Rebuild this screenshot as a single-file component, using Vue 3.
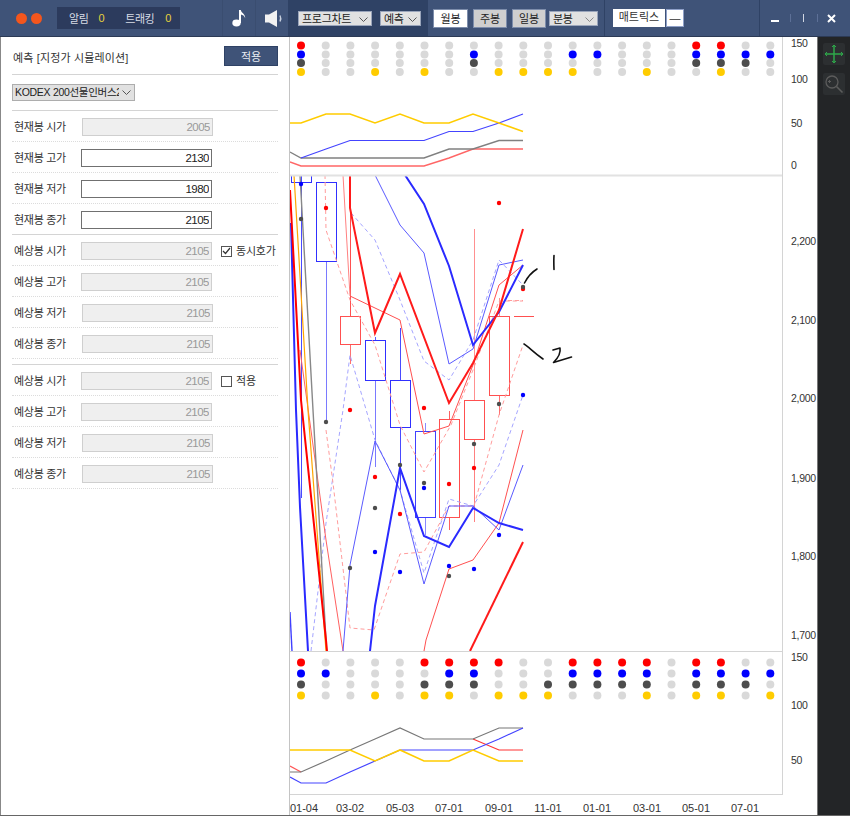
<script setup>
const col = i => 301 + i * 24.7

const dotColors = { r: '#ff0000', b: '#0000ff', k: '#4d4d4d', y: '#ffcc00' }

function dotRows(rows) {
  const out = []
  rows.forEach(row => {
    for (let i = 0; i < 20; i++) {
      out.push({
        x: col(i),
        y: row.y,
        fill: row.on.includes(i) ? dotColors[row.c] : '#d9d9d9'
      })
    }
  })
  return out
}

const topDots = dotRows([
  { y: 45.5, c: 'r', on: [0, 16, 17] },
  { y: 54.5, c: 'b', on: [0, 7, 11, 12, 16, 17, 18, 19] },
  { y: 63, c: 'k', on: [0, 7, 16, 17, 18] },
  { y: 72, c: 'y', on: [0, 3, 5, 8, 9, 10, 11, 14, 17] }
])

const bottomDots = dotRows([
  { y: 662.5, c: 'r', on: [0, 5, 6, 7, 8, 11, 12, 13, 14, 16, 17] },
  { y: 673.5, c: 'b', on: [0, 1, 6, 7, 11, 12, 13, 14, 16, 17, 18, 19] },
  { y: 684.5, c: 'k', on: [0, 5, 6, 7, 10, 11, 12, 13, 14, 16, 17, 18] },
  { y: 695.5, c: 'y', on: [0, 3, 5, 6, 8, 9, 10, 14, 16, 17, 19] }
])

const topLines = [
  { c: '#ff6666', w: 1.4, p: '290,162 301,166 424,166 449,158 473,149 523,149' },
  { c: '#808080', w: 1.4, p: '290,152 301,158 424,158 449,149 473,149 499,140.5 523,140.5' },
  { c: '#4444ff', w: 1.2, p: '301,158 326,149 350,140.5 424,140.5 449,131.5 473,131.5 499,123 523,114' },
  { c: '#ffcc00', w: 1.6, p: '290,123 301,123 326,114 350,114 375,123 400,114 424,123 449,123 473,114 499,123 523,131.5' }
]

const bottomLines = [
  { c: '#ff5555', w: 1.2, p: '290,766 301,772' },
  { c: '#ff3333', w: 1.2, p: '473,739 499,750 523,750' },
  { c: '#777777', w: 1.2, p: '290,772 301,772 326,761 350,750 375,739 400,728 424,739 473,739 499,728 523,728' },
  { c: '#4444ff', w: 1.2, p: '290,777 301,783 326,783 350,772 375,761 400,750 473,750 499,739 523,728' },
  { c: '#ffcc00', w: 1.6, p: '290,750 350,750 375,761 400,750 424,761 449,761 473,750 499,761 523,761' }
]

const mainLines = [
  // 점선
  { c: '#a5a5ff', w: 1, d: true, p: '351,213 375,240 400,300 424,361 449,380 473,340 499,260 523,285' },
  { c: '#a5a5ff', w: 1, d: true, p: '311,651 326,523 343,410 350,355 375,440 400,490 424,573 449,499 473,506 499,465 523,395' },
  { c: '#ff9c9c', w: 1, d: true, p: '325,175 326,230 350,300 375,345 400,425 424,472 451,425 473,370 499,301 523,301' },
  { c: '#ff9c9c', w: 1, d: true, p: '326,430 333,483 350,628 374,630 400,554 424,552 449,506 474,506 499,415 523,345' },
  // 가는선
  { c: '#ff8080', w: 1, p: '343,175 350,296' },
  { c: '#ff5050', w: 1, p: '350,296 400,320 424,434 449,426 473,365 499,285 523,265' },
  { c: '#ff6060', w: 1, p: '300,350 326,540 343,651' },
  { c: '#ff5050', w: 1, p: '424,651 426,640 449,569 473,560 499,523 523,430' },
  { c: '#5a5aff', w: 1, p: '375,175 400,225 424,253 449,364 473,349 499,265 523,260' },
  { c: '#5a5aff', w: 1, p: '343,651 350,565 375,441 400,490 424,584 449,506 473,506 499,530 523,465' },
  // 왼쪽 세로선
  { c: '#ffa500', w: 1.2, p: '294,175 308,410 326,651' },
  { c: '#888888', w: 1.4, p: '300,175 313,410 326,640' },
  { c: '#2a2aff', w: 2, p: '291,223 296,410 300,507 308,651' },
  { c: '#4040ff', w: 1.4, p: '290,612 292,651' },
  { c: '#ff0000', w: 2, p: '290,190 301,400 326,640 327,651' },
  // 굵은선
  { c: '#2a2aff', w: 2, p: '405,175 424,204 449,266 473,345 499,312 523,265' },
  { c: '#2a2aff', w: 2, p: '370,651 375,606 400,468 424,536 449,547 473,508 499,523 523,530' },
  { c: '#ff1a1a', w: 2, p: '350,175 350,208 375,333 400,274 449,403 473,363 499,310 523,229' },
  { c: '#ff1a1a', w: 2, p: '470,651 523,542' }
]

const wicks = [
  { x: 301, y1: 175, y2: 498, c: '#4a4aff' },
  { x: 326, y1: 261, y2: 422, c: '#7a7aff' },
  { x: 350, y1: 175, y2: 316, c: '#ff5050' },
  { x: 350, y1: 344, y2: 364, c: '#ff7070' },
  { x: 375, y1: 337, y2: 340, c: '#5a5aff' },
  { x: 375, y1: 380, y2: 467, c: '#7a7aff' },
  { x: 400, y1: 328, y2: 380, c: '#4a4aff' },
  { x: 400, y1: 427, y2: 490, c: '#4a4aff' },
  { x: 425, y1: 423, y2: 431, c: '#8a8aff' },
  { x: 425, y1: 517, y2: 535, c: '#8a8aff' },
  { x: 449, y1: 411, y2: 419, c: '#ff6060' },
  { x: 449, y1: 517, y2: 530, c: '#ff6060' },
  { x: 474, y1: 229, y2: 400, c: '#ff9090' },
  { x: 474, y1: 439, y2: 522, c: '#ff8080' },
  { x: 499, y1: 298, y2: 316, c: '#ff9090' },
  { x: 499, y1: 395, y2: 415, c: '#ff7070' }
]

const candles = [
  { x: 291, y: 170, h: 12, c: '#3030ff' },
  { x: 316, y: 182, h: 79, c: '#3030ff' },
  { x: 340, y: 316, h: 28, c: '#ff5050' },
  { x: 365, y: 340, h: 40, c: '#3030ff' },
  { x: 390, y: 380, h: 47, c: '#3030ff' },
  { x: 415, y: 431, h: 86, c: '#4040ff' },
  { x: 439, y: 419, h: 98, c: '#ff5050' },
  { x: 464, y: 400, h: 39, c: '#ff5050' },
  { x: 489, y: 316, h: 79, c: '#ff5050' }
]

const points = [
  [326, 208, 'r'], [350, 410, 'r'], [424, 408, 'r'], [499, 203, 'r'], [523, 289, 'r'],
  [375, 477, 'r'], [400, 514, 'r'], [449, 484, 'r'], [474, 468, 'r'],
  [301, 219, 'k'], [326, 422, 'k'], [350, 568, 'k'], [375, 508, 'k'], [400, 465, 'k'],
  [424, 483, 'k'], [449, 576, 'k'], [474, 444, 'k'], [499, 404, 'k'], [523, 287, 'k'],
  [301, 184, 'b'], [375, 552, 'b'], [400, 572, 'b'], [424, 488, 'b'], [449, 566, 'b'],
  [474, 569, 'b'], [499, 535, 'b'], [523, 395, 'b']
]

const yLabels = [
  ['150', 47], ['100', 83], ['50', 127], ['0', 169],
  ['2,200', 245], ['2,100', 324], ['2,000', 402], ['1,900', 482], ['1,800', 560], ['1,700', 639],
  ['150', 661], ['100', 709], ['50', 764]
]

const xLabels = [
  ['01-04', 304], ['03-02', 350], ['05-03', 400], ['07-01', 449], ['09-01', 499],
  ['11-01', 548], ['01-01', 597], ['03-01', 647], ['05-01', 696], ['07-01', 745]
]

const group1 = [
  { label: '현재봉 시가', value: 2005, disabled: true, shift: true },
  { label: '현재봉 고가', value: 2130 },
  { label: '현재봉 저가', value: 1980 },
  { label: '현재봉 종가', value: 2105, last: true }
]
const group2 = [
  { label: '예상봉 시가', value: 2105, disabled: true, check: '동시호가', checked: true },
  { label: '예상봉 고가', value: 2105, disabled: true },
  { label: '예상봉 저가', value: 2105, disabled: true, shift: true },
  { label: '예상봉 종가', value: 2105, disabled: true, shift: true }
]
const group3 = [
  { label: '예상봉 시가', value: 2105, disabled: true, check: '적용', checked: false },
  { label: '예상봉 고가', value: 2105, disabled: true },
  { label: '예상봉 저가', value: 2105, disabled: true, shift: true },
  { label: '예상봉 종가', value: 2105, disabled: true, shift: true }
]
</script>

<template>
  <div class="app">
    <header class="toolbar">
      <div class="tb-left">
        <span class="lamp"></span>
        <span class="lamp second"></span>
        <div class="alarm">
          <span>알림</span><b class="n1">0</b>
          <span class="track">트래킹</span><b class="n2">0</b>
        </div>
        <div class="tb-icon first">
          <svg width="14" height="17" viewBox="0 0 14 17">
            <ellipse cx="4.5" cy="13" rx="4.2" ry="3.4" fill="#fff" />
            <path d="M7 13V0h1.8c.4 3 4.6 3.8 4.4 8.2-.7-2.300-2.600-3.400-4.200-3.700V13z" fill="#fff" />
          </svg>
        </div>
        <div class="tb-icon speaker">
          <svg width="19" height="17" viewBox="0 0 19 17">
            <path d="M0 4.500h4L12 0v17l-8-4.500H0z" fill="#f2f2f2" />
            <path d="M15 5.500c1 2 1 4 0 6" stroke="#c8d0de" stroke-width="1.400" fill="none" />
          </svg>
        </div>
      </div>

      <div class="tb-mid">
        <div class="sel w74">프로그차트
          <svg class="chev" width="9" height="5" viewBox="0 0 9 5"><path d="M.5.500l4 4 4-4" fill="none" stroke="#555" /></svg>
        </div>
        <div class="sel w41">예측
          <svg class="chev" width="9" height="5" viewBox="0 0 9 5"><path d="M.5.500l4 4 4-4" fill="none" stroke="#555" /></svg>
        </div>
      </div>

      <div class="tb-period">
        <button class="pbtn on">월봉</button>
        <button class="pbtn">주봉</button>
        <button class="pbtn">일봉</button>
        <div class="sel w49">분봉
          <svg class="chev" width="9" height="5" viewBox="0 0 9 5"><path d="M.5.500l4 4 4-4" fill="none" stroke="#888" /></svg>
        </div>
      </div>

      <div class="tb-matrix">
        <span class="matrix">매트릭스</span>
        <span class="dash">—</span>
      </div>

      <div class="tb-win">
        <span class="wmin"></span>
        <span class="wsep s1"></span>
        <span class="wbar"></span>
        <span class="wsep s2"></span>
        <svg class="wclose" width="9" height="9" viewBox="0 0 9 9"><path d="M1 1l7 7M8 1L1 8" stroke="#fff" stroke-width="2" /></svg>
      </div>
    </header>

    <div class="body">
      <aside class="side">
        <div class="title-row">
          <span class="title">예측 [지정가 시뮬레이션]</span>
          <button class="apply">적용</button>
        </div>
        <div class="pick-row">
          <div class="sel pick"><span class="pick-text">KODEX 200선물인버스2</span>
            <svg class="chev" width="9" height="5" viewBox="0 0 9 5"><path d="M.5.500l4 4 4-4" fill="none" stroke="#555" /></svg>
          </div>
        </div>

        <div class="group">
          <div v-for="r in group1" :key="r.label" class="row" :class="{ last: r.last }">
            <label>{{ r.label }}</label>
            <input :value="r.value" :disabled="r.disabled" :class="{ shift: r.shift }" />
          </div>
        </div>
        <div class="group ruled">
          <div v-for="r in group2" :key="r.label" class="row">
            <label>{{ r.label }}</label>
            <input :value="r.value" :disabled="r.disabled" :class="{ shift: r.shift }" />
            <div v-if="r.check" class="check">
              <span class="box">
                <svg v-if="r.checked" width="9" height="8" viewBox="0 0 9 8"><path d="M1 4l2.500 2.500L8 1" fill="none" stroke="#333" stroke-width="1.200" /></svg>
              </span>
              {{ r.check }}
            </div>
          </div>
        </div>
        <div class="group ruled gap">
          <div v-for="r in group3" :key="r.label" class="row">
            <label>{{ r.label }}</label>
            <input :value="r.value" :disabled="r.disabled" :class="{ shift: r.shift }" />
            <div v-if="r.check" class="check">
              <span class="box">
                <svg v-if="r.checked" width="9" height="8" viewBox="0 0 9 8"><path d="M1 4l2.500 2.500L8 1" fill="none" stroke="#333" stroke-width="1.200" /></svg>
              </span>
              {{ r.check }}
            </div>
          </div>
        </div>
      </aside>

      <svg class="chart" width="527" height="779" viewBox="290 37 527 779">
        <defs>
          <clipPath id="main-clip"><rect x="290" y="176" width="492" height="475" /></clipPath>
        </defs>

        <circle v-for="(d, i) in topDots" :key="'t' + i" :cx="d.x" :cy="d.y" r="4" :fill="d.fill" />
        <polyline v-for="(l, i) in topLines" :key="'tl' + i" :points="l.p" fill="none" :stroke="l.c" :stroke-width="l.w" />

        <g clip-path="url(#main-clip)">
          <line v-for="(w, i) in wicks" :key="'w' + i" :x1="w.x + 0.5" :x2="w.x + 0.5" :y1="w.y1" :y2="w.y2" :stroke="w.c" />
          <rect v-for="(c, i) in candles" :key="'c' + i" :x="c.x + 0.5" :y="c.y + 0.5" width="20" :height="c.h" fill="none" :stroke="c.c" />
          <line x1="514" x2="534" y1="316.500" y2="316.500" stroke="#ff5050" />
          <line x1="508" x2="523" y1="300.500" y2="300.500" stroke="#ff9c9c" stroke-dasharray="4 3" />
          <polyline
            v-for="(l, i) in mainLines"
            :key="'m' + i"
            :points="l.p"
            fill="none"
            :stroke="l.c"
            :stroke-width="l.w"
            :stroke-dasharray="l.d ? '4 3' : null"
          />
          <circle v-for="(p, i) in points" :key="'p' + i" :cx="p[0]" :cy="p[1]" r="2.200" :fill="dotColors[p[2]]" />
        </g>

        <!-- 손글씨 -->
        <g fill="none" stroke="#111" stroke-width="1.600" stroke-linecap="round" stroke-linejoin="round">
          <path d="M524.500 283c2-4 6-10 12.500-14" />
          <path d="M554 255.500c-.3 4-.2 9 0 14" />
          <path d="M524 344c5 3 9 8 19 15" />
          <path d="M553 350l7-2c1 5-2 10-6.500 14.500l18-5.500" />
        </g>

        <circle v-for="(d, i) in bottomDots" :key="'b' + i" :cx="d.x" :cy="d.y" r="4" :fill="d.fill" />
        <polyline v-for="(l, i) in bottomLines" :key="'bl' + i" :points="l.p" fill="none" :stroke="l.c" :stroke-width="l.w" />

        <line x1="290" x2="783" y1="175.500" y2="175.500" stroke="#e2e2e2" stroke-width="2" />
        <line x1="290" x2="783" y1="651.500" y2="651.500" stroke="#d4d4d4" />
        <line x1="290" x2="783" y1="794.500" y2="794.500" stroke="#d4d4d4" />
        <line x1="782.500" x2="782.500" y1="37" y2="795" stroke="#d4d4d4" />

        <text v-for="(t, i) in yLabels" :key="'y' + i" x="791" :y="t[1]" class="axis yl">{{ t[0] }}</text>
        <text v-for="(t, i) in xLabels" :key="'x' + i" :x="t[1]" y="812" class="axis mid">{{ t[0] }}</text>
      </svg>

      <nav class="rail">
        <button class="tool">
          <svg width="20" height="20" viewBox="0 0 20 20">
            <path d="M10 1v18M1 10h18" stroke="#2ea84a" stroke-width="1.500" />
            <path d="M8 3l2-2 2 2M8 17l2 2 2-2M3 8l-2 2 2 2M17 8l2 2-2 2" stroke="#2ea84a" fill="none" />
          </svg>
        </button>
        <button class="tool">
          <svg width="20" height="20" viewBox="0 0 20 20">
            <circle cx="8" cy="8" r="6" fill="none" stroke="#5c5c5c" stroke-width="1.300" />
            <path d="M12.500 12.500l6 6" stroke="#5c5c5c" stroke-width="1.600" />
            <path d="M4 7.500h3M5.500 6v3" stroke="#5c5c5c" />
          </svg>
        </button>
      </nav>
    </div>
  </div>
</template>

<style scoped>
.app {
  width: 850px;
  height: 816px;
  box-sizing: border-box;
  display: flex;
  flex-direction: column;
  background: #fff;
  border-bottom: 1px solid #666;
  font-family: "Liberation Sans", "Noto Sans CJK KR", sans-serif;
  font-size: 11px;
  color: #333;
  overflow: hidden;
}

.toolbar {
  height: 37px;
  flex: none;
  display: flex;
  box-sizing: border-box;
  background: #3f5378;
  border-bottom: 1px solid #2c3a55;
  white-space: nowrap;
}

.tb-left {
  width: 288px;
  flex: none;
  display: flex;
  align-items: center;
  padding-left: 16px;
  box-sizing: border-box;
}

.lamp {
  width: 11px;
  height: 11px;
  flex: none;
  border-radius: 50%;
  background: #f4561d;
}
.lamp.second {
  margin-left: 4px;
}

.alarm {
  margin-left: 15px;
  width: 123px;
  height: 22px;
  flex: none;
  background: #2c3b5d;
  color: #d8dde6;
  display: flex;
  align-items: center;
  padding-left: 12px;
  box-sizing: border-box;
  letter-spacing: -0.4px;
}
.alarm b {
  color: #e6d23c;
  font-weight: normal;
}
.alarm .n1 {
  margin-left: 10px;
}
.alarm .track {
  margin-left: 21px;
}
.alarm .n2 {
  margin-left: 11px;
}

.tb-icon {
  width: 33px;
  height: 36px;
  flex: none;
  display: flex;
  align-items: center;
  justify-content: center;
  border-left: 1px solid #3a4d70;
  box-sizing: border-box;
}
.tb-icon.first {
  margin-left: 42px;
}
.tb-icon.speaker {
  padding-left: 5px;
}

.tb-mid {
  width: 140px;
  flex: none;
  display: flex;
  align-items: center;
  gap: 8px;
  padding-left: 10px;
  box-sizing: border-box;
  background: #2f4265;
}

.tb-period {
  width: 177px;
  flex: none;
  display: flex;
  align-items: center;
  padding-left: 5px;
  gap: 5px;
  box-sizing: border-box;
  border-right: 1px solid #2f4265;
}

.tb-matrix {
  width: 155px;
  flex: none;
  display: flex;
  align-items: center;
  padding-left: 8px;
  box-sizing: border-box;
  border-right: 1px solid #2f4265;
}

.matrix,
.dash {
  height: 18px;
  line-height: 17px;
  background: #fff;
  box-sizing: border-box;
  color: #333;
}
.matrix {
  width: 52px;
  text-align: center;
}
.dash {
  width: 18px;
  margin-left: 1px;
  text-align: center;
  border: 1px solid #8fa0c8;
}

.tb-win {
  flex: 1;
  display: flex;
  align-items: center;
  padding-left: 11px;
}
.wmin {
  width: 8px;
  height: 2px;
  background: #fff;
  margin-top: 6px;
}
.wsep {
  width: 1px;
  height: 8px;
  background: #5d7097;
}
.wsep.s1 {
  margin-left: 11px;
}
.wsep.s2 {
  margin-left: 13px;
}
.wbar {
  width: 1px;
  height: 8px;
  background: #d0d6e2;
  margin-left: 12px;
}
.wclose {
  margin-left: 9px;
}

.sel {
  position: relative;
  height: 15px;
  line-height: 14px;
  background: #e1e1e1;
  border: 1px solid #9aa5bb;
  box-sizing: border-box;
  padding-left: 3px;
  color: #222;
  white-space: nowrap;
  overflow: hidden;
  letter-spacing: -0.3px;
}
.chev {
  position: absolute;
  right: 3px;
  top: 5px;
}
.w74 {
  width: 74px;
}
.w41 {
  width: 41px;
}
.w49 {
  width: 49px;
  margin-left: -2px;
}

.pbtn {
  width: 34px;
  height: 19px;
  flex: none;
  padding: 0;
  border: 1px solid #7d8dab;
  background: #cfcfcf;
  color: #222;
  font: inherit;
}
.pbtn.on {
  width: 35px;
  background: #fff;
}

.body {
  flex: 1;
  display: flex;
  min-height: 0;
}

.side {
  width: 290px;
  flex: none;
  box-sizing: border-box;
  padding: 0 11px 0 12px;
  border-left: 1px solid #888;
  border-right: 1px solid #c4c4c4;
}

.title-row {
  height: 38px;
  display: flex;
  align-items: center;
  justify-content: space-between;
  padding-left: 1px;
  border-bottom: 1px solid #d4d4d4;
  margin-left: -1px;
  box-sizing: border-box;
}
.title {
  margin-top: 2px;
  letter-spacing: 0.15px;
}
.apply {
  width: 54px;
  height: 20px;
  padding: 0;
  margin-top: 1px;
  border: 1px solid #2f4265;
  background: #3f5378;
  color: #e8ebf1;
  font: inherit;
}

.pick-row {
  height: 36px;
  display: flex;
  align-items: center;
  margin-left: -1px;
  border-bottom: 1px solid #d4d4d4;
  box-sizing: border-box;
}
.sel.pick {
  width: 123px;
  height: 17px;
  line-height: 15px;
  padding-left: 2px;
  font-size: 10.5px;
  border-color: #adadad;
}
.pick-text {
  display: block;
  width: 104px;
  overflow: hidden;
}

.row {
  height: 31px;
  box-sizing: border-box;
  display: flex;
  align-items: flex-start;
  padding-top: 7px;
  margin-left: -1px;
  border-bottom: 1px dotted #dcdcdc;
}
.row.last {
  height: 30px;
  border-bottom: none;
}
.row label {
  width: 69px;
  flex: none;
  padding-left: 2px;
  box-sizing: border-box;
  line-height: 19px;
  letter-spacing: -0.3px;
}
.row input {
  width: 131px;
  height: 18px;
  flex: none;
  box-sizing: border-box;
  padding: 0 2px 0 0;
  margin: 0;
  border: 1px solid #707070;
  background: #fff;
  color: #222;
  text-align: right;
  font-family: "Liberation Sans", sans-serif;
  font-size: 11.5px;
  letter-spacing: -0.5px;
  outline: none;
}
.row input:disabled {
  border-color: #cfcfcf;
  background: #efefef;
  color: #999;
}
.row input.shift {
  margin-left: 1px;
}

.group.ruled {
  border-top: 1px solid #d4d4d4;
  margin-left: -1px;
}
.group.ruled .row {
  margin-left: 0;
}
.group.gap {
  margin-top: 5px;
}

.check {
  margin-left: 9px;
  display: flex;
  align-items: center;
  gap: 4px;
  line-height: 18px;
  white-space: nowrap;
  letter-spacing: -0.2px;
}
.box {
  width: 11px;
  height: 11px;
  flex: none;
  box-sizing: border-box;
  border: 1px solid #555;
  background: #fff;
  display: flex;
  align-items: center;
  justify-content: center;
}

.chart {
  flex: none;
  display: block;
}
.axis {
  font-family: "Liberation Sans", sans-serif;
  font-size: 11px;
  fill: #333;
}
.axis.yl {
  letter-spacing: -0.3px;
  font-size: 10.5px;
}
.axis.mid {
  text-anchor: middle;
}

.rail {
  flex: 1;
  background: #232527;
  border-left: 1px solid #777;
  box-sizing: border-box;
  display: flex;
  flex-direction: column;
  align-items: center;
  gap: 8px;
  padding-top: 6px;
}
.tool {
  width: 22px;
  height: 22px;
  padding: 0;
  border: none;
  border-radius: 2px;
  background: #2c2f31;
  display: flex;
  align-items: center;
  justify-content: center;
}
</style>
